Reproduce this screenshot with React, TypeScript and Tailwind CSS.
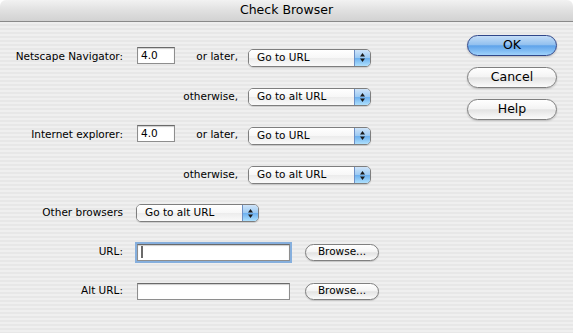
import React from "react";

const stripes =
  "bg-[repeating-linear-gradient(180deg,#efefef_0px,#efefef_2px,#e7e7e7_2px,#e7e7e7_4px)]";

function Arrows() {
  return (
    <svg width="7" height="11" viewBox="0 0 7 11">
      <path d="M3.5 1 L6 4.5 L1 4.5 Z" fill="#1a1a1a" />
      <path d="M3.5 10 L6 6.5 L1 6.5 Z" fill="#1a1a1a" />
    </svg>
  );
}

function Select({ value }: { value: string }) {
  return (
    <div className="flex h-[18px] w-[123px] overflow-hidden rounded-[5px] border border-[#7e7e7e] shadow-[0_1px_1px_rgba(0,0,0,0.15)]">
      <div className="flex flex-1 items-center bg-[linear-gradient(180deg,#ffffff_0%,#f7f7f7_50%,#ececec_52%,#fafafa_100%)] pl-[8px] text-[10.5px] text-black">
        {value}
      </div>
      <div className="flex w-[16px] items-center justify-center border-l border-[#6d8fc4] bg-[linear-gradient(180deg,#cfe4f9_0%,#9ccaf3_48%,#6cb0ef_52%,#aee0fd_100%)]">
        <Arrows />
      </div>
    </div>
  );
}

function TextInput({ value, width, focused }: { value?: string; width: string; focused?: boolean }) {
  return (
    <div
      className={`flex h-[17px] items-center border border-[#8e8e8e] border-t-[#6a6a6a] bg-white pl-[3px] text-[10.5px] text-black shadow-[inset_0_1px_1px_rgba(0,0,0,0.2)] ${width} ${
        focused ? "outline outline-[2px] outline-[#86afdd]" : ""
      }`}
    >
      {focused ? <div className="h-[12px] w-[2px] bg-[#6a6a6a]" /> : value}
    </div>
  );
}

function PushButton({ label, def }: { label: string; def?: boolean }) {
  return (
    <div
      className={`flex h-[21px] w-[90px] items-center justify-center rounded-full border text-[12.5px] text-black shadow-[0_1px_2px_rgba(0,0,0,0.2)] ${
        def
          ? "border-[#30478a] bg-[linear-gradient(180deg,#c4ddf7_0%,#93c1ef_45%,#5fa3ea_52%,#9fd2fb_100%)]"
          : "border-[#7f7f7f] bg-[linear-gradient(180deg,#ffffff_0%,#f4f4f4_45%,#e3e3e3_52%,#fbfbfb_100%)]"
      }`}
    >
      {label}
    </div>
  );
}

function SmallButton({ label }: { label: string }) {
  return (
    <div className="flex h-[17px] w-[74px] items-center justify-center rounded-full border border-[#7f7f7f] bg-[linear-gradient(180deg,#ffffff_0%,#f4f4f4_45%,#e3e3e3_52%,#fbfbfb_100%)] text-[10.5px] text-black shadow-[0_1px_1px_rgba(0,0,0,0.15)]">
      {label}
    </div>
  );
}

function Label({ children, width = "w-[105px]" }: { children: React.ReactNode; width?: string }) {
  return <div className={`${width} flex shrink-0 justify-end whitespace-nowrap`}>{children}</div>;
}

export default function App() {
  return (
    <div className="h-[333px] w-[573px] overflow-hidden bg-white font-['DejaVu_Sans',sans-serif] text-[10.5px] text-black">
      {/* title bar */}
      <div className="flex h-[22px] items-center justify-center rounded-t-[6px] border-b border-[#8a8a8a] bg-[linear-gradient(180deg,#f2f2f2_0%,#e0e0e0_50%,#d2d2d2_100%)] text-[12.5px]">
        Check Browser
      </div>

      <div className={`flex h-[311px] ${stripes}`}>
        {/* form */}
        <div className="flex flex-col pl-[18px] pt-[25px]">
          <div className="flex h-[20px] items-center">
            <Label>Netscape Navigator:</Label>
            <div className="ml-[14px] mb-[3px]">
              <TextInput value="4.0" width="w-[38px]" />
            </div>
            <Label width="w-[63px]">or later,</Label>
            <div className="ml-[10px] mt-[1px]">
              <Select value="Go to URL" />
            </div>
          </div>

          <div className="mt-[20px] flex h-[20px] items-center">
            <Label width="w-[220px]">otherwise,</Label>
            <div className="ml-[10px]">
              <Select value="Go to alt URL" />
            </div>
          </div>

          <div className="mt-[18px] flex h-[20px] items-center">
            <Label>Internet explorer:</Label>
            <div className="ml-[14px] mb-[3px]">
              <TextInput value="4.0" width="w-[38px]" />
            </div>
            <Label width="w-[63px]">or later,</Label>
            <div className="ml-[10px] mt-[1px]">
              <Select value="Go to URL" />
            </div>
          </div>

          <div className="mt-[20px] flex h-[20px] items-center">
            <Label width="w-[220px]">otherwise,</Label>
            <div className="ml-[10px]">
              <Select value="Go to alt URL" />
            </div>
          </div>

          <div className="mt-[18px] flex h-[20px] items-center">
            <Label>Other browsers</Label>
            <div className="ml-[13px]">
              <Select value="Go to alt URL" />
            </div>
          </div>

          <div className="mt-[19px] flex h-[20px] items-center">
            <Label>URL:</Label>
            <div className="ml-[14px]">
              <TextInput width="w-[153px]" focused />
            </div>
            <div className="ml-[15px]">
              <SmallButton label="Browse..." />
            </div>
          </div>

          <div className="mt-[19px] flex h-[20px] items-center">
            <Label>Alt URL:</Label>
            <div className="ml-[14px]">
              <TextInput width="w-[153px]" />
            </div>
            <div className="ml-[15px]">
              <SmallButton label="Browse..." />
            </div>
          </div>
        </div>

        {/* buttons */}
        <div className="ml-auto flex flex-col gap-[11px] pr-[16px] pt-[13px]">
          <PushButton label="OK" def />
          <PushButton label="Cancel" />
          <PushButton label="Help" />
        </div>
      </div>
    </div>
  );
}
